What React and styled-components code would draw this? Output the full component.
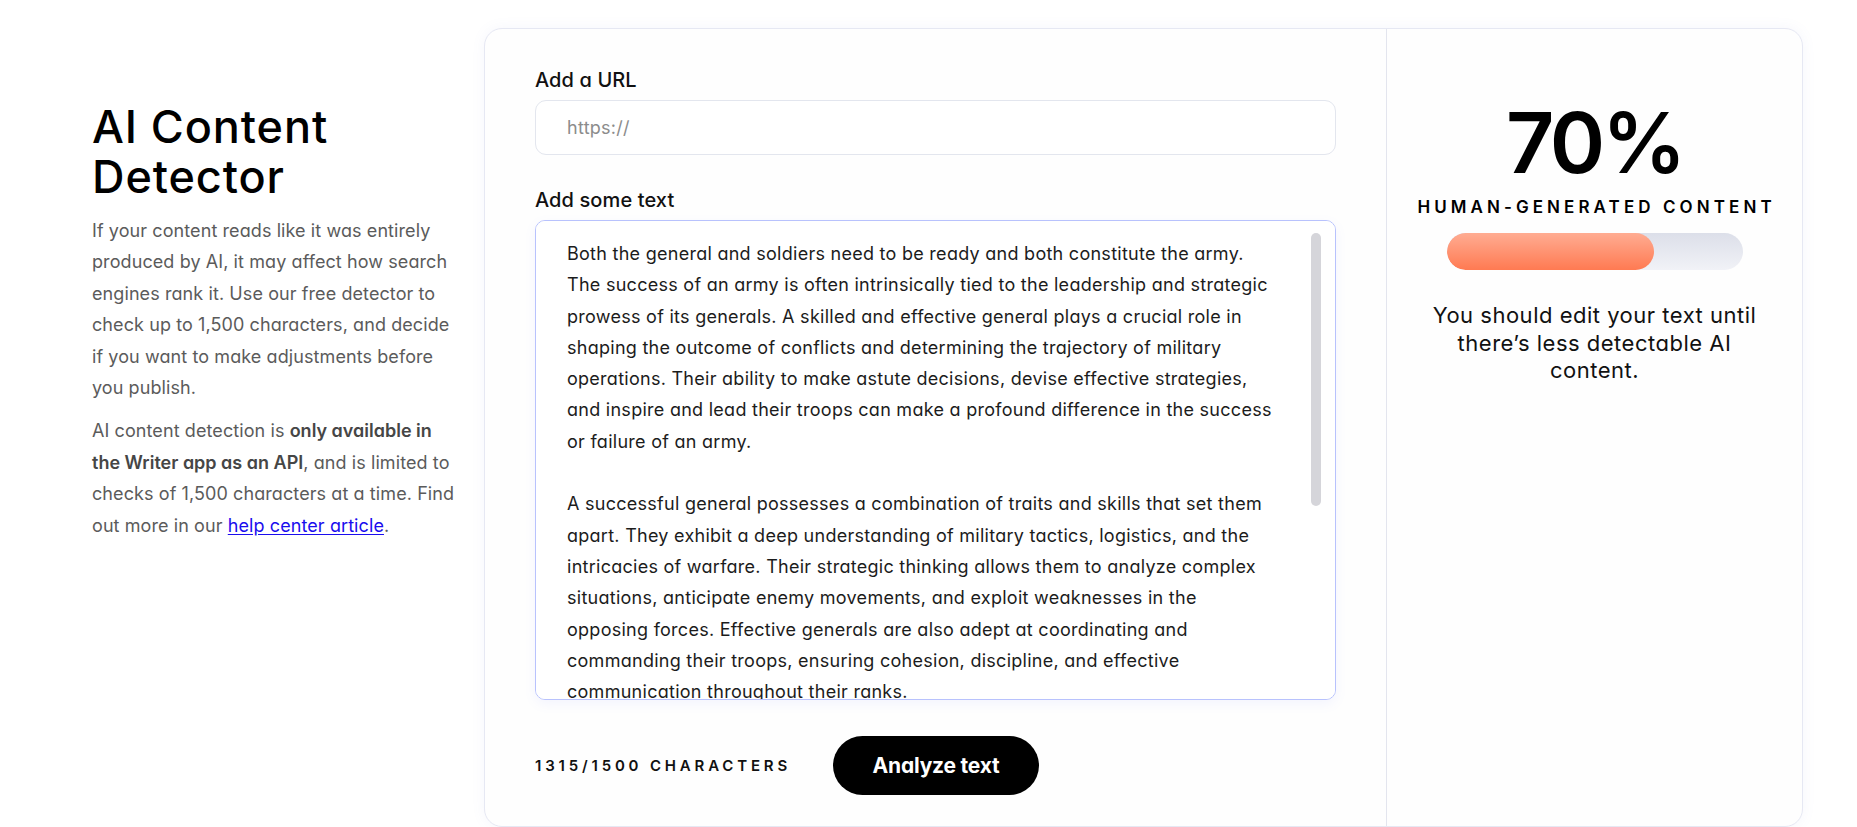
import React from "react";
import styled, { createGlobalStyle } from "styled-components";

const GlobalStyle = createGlobalStyle`
  html, body {
    margin: 0;
    padding: 0;
    background: #ffffff;
    overflow: hidden;
  }
  body {
    font-family: "Inter", "Noto Sans", "Liberation Sans", sans-serif;
    font-feature-settings: "cv11" 1;
    color: #111111;
    -webkit-font-smoothing: antialiased;
  }
  *, *::before, *::after { box-sizing: border-box; }
`;

const Page = styled.main`
  display: flex;
  align-items: flex-start;
  gap: 22px;
  padding: 28px 0 0 92px;
`;

const Intro = styled.section`
  width: 370px;
  flex: none;
  padding-top: 74px;
`;

const Title = styled.h1`
  margin: 0 0 13px;
  font-size: 45px;
  line-height: 50px;
  font-weight: 500;
  letter-spacing: 0.02em;
  color: #000000;
`;

const Lead = styled.p`
  margin: 0 0 12px;
  font-size: 18px;
  line-height: 31.4px;
  letter-spacing: 0.005em;
  color: #5b5b5b;

  strong {
    font-weight: 600;
    letter-spacing: 0;
    color: #464646;
  }
`;

const HelpLink = styled.a`
  color: #1a0dee;
  text-decoration: underline;
  text-underline-offset: 2px;
`;

const Card = styled.section`
  flex: none;
  width: 1319px;
  display: flex;
  border: 1px solid #e6e8f3;
  border-radius: 18px;
  background: #fefefe;
  box-shadow: 0 0 14px rgba(120, 130, 210, 0.07);
`;

const FormPane = styled.div`
  width: 902px;
  flex: none;
  padding: 36px 50px 31px;
  border-right: 1px solid #e3e5ee;
  display: flex;
  flex-direction: column;
`;

const Label = styled.label`
  display: block;
  margin: ${(p) => (p.$spaced ? "30px" : "0")} 0 5px;
  font-size: 20px;
  line-height: 30px;
  font-weight: 500;
  letter-spacing: 0.005em;
  color: #111111;
`;

const UrlInput = styled.input`
  width: 100%;
  height: 55px;
  padding: 0 20px 0 31px;
  border: 1px solid #e3e6ee;
  border-radius: 11px;
  background: #ffffff;
  font: inherit;
  font-size: 18px;
  letter-spacing: 0.015em;
  color: #222222;
  outline: none;

  &::placeholder {
    color: #8c8c8c;
  }
`;

const TextBox = styled.div`
  position: relative;
`;

const TextArea = styled.textarea`
  display: block;
  width: 100%;
  height: 480px;
  margin: 0;
  padding: 17px 56px 17px 31px;
  border: 1px solid #b8c2fd;
  border-radius: 10px;
  background: #ffffff;
  box-shadow: 0 4px 12px rgba(110, 125, 255, 0.08);
  font: inherit;
  font-size: 18px;
  line-height: 31.3px;
  letter-spacing: 0.015em;
  color: #1c1c1c;
  resize: none;
  outline: none;
  overflow-y: scroll;
  scrollbar-width: none;
`;

const ScrollThumb = styled.span`
  position: absolute;
  top: 13px;
  right: 15px;
  width: 10px;
  height: 273px;
  border-radius: 5px;
  background: #d5d5da;
  pointer-events: none;
`;

const Footer = styled.div`
  margin-top: 36px;
  display: flex;
  align-items: center;
  gap: 42px;
`;

const Count = styled.span`
  font-size: 15px;
  font-weight: 600;
  letter-spacing: 0.255em;
  text-transform: uppercase;
  color: #111111;
`;

const AnalyzeButton = styled.button`
  width: 206px;
  height: 59px;
  border: none;
  border-radius: 30px;
  background: #000000;
  color: #ffffff;
  font: inherit;
  font-size: 21px;
  font-weight: 700;
  letter-spacing: -0.01em;
  cursor: pointer;
`;

const ResultPane = styled.div`
  flex: 1;
  min-width: 0;
  padding: 72px 24px 0;
  display: flex;
  flex-direction: column;
  align-items: center;
  text-align: center;
`;

const Score = styled.div`
  font-size: 84px;
  line-height: 1;
  font-weight: 600;
  letter-spacing: -0.04em;
  color: #000000;
`;

const ScoreLabel = styled.div`
  margin-top: 10px;
  padding-left: 0.24em;
  font-size: 17px;
  line-height: 24px;
  font-weight: 600;
  letter-spacing: 0.24em;
  text-transform: uppercase;
  color: #000000;
  white-space: nowrap;
`;

const Meter = styled.div`
  margin-top: 14px;
  width: 296px;
  height: 37px;
  border-radius: 19px;
  overflow: hidden;
  background: linear-gradient(180deg, #dcdfe9 0%, #f1f2f7 100%);
`;

const MeterFill = styled.div`
  height: 100%;
  border-radius: 19px;
  background: linear-gradient(180deg, #ffac92 0%, #ff7a52 100%);
`;

const Advice = styled.p`
  margin: 32px 0 0;
  max-width: 345px;
  font-size: 22px;
  line-height: 27.5px;
  font-weight: 400;
  letter-spacing: 0.023em;
  color: #111111;
`;

const SAMPLE_TEXT = `Both the general and soldiers need to be ready and both constitute the army. The success of an army is often intrinsically tied to the leadership and strategic prowess of its generals. A skilled and effective general plays a crucial role in shaping the outcome of conflicts and determining the trajectory of military operations. Their ability to make astute decisions, devise effective strategies, and inspire and lead their troops can make a profound difference in the success or failure of an army.

A successful general possesses a combination of traits and skills that set them apart. They exhibit a deep understanding of military tactics, logistics, and the intricacies of warfare. Their strategic thinking allows them to analyze complex situations, anticipate enemy movements, and exploit weaknesses in the opposing forces. Effective generals are also adept at coordinating and commanding their troops, ensuring cohesion, discipline, and effective communication throughout their ranks.

Ultimately, the bond between a general and the soldiers is built on trust. A general who leads by example and values the well-being of the troops can inspire loyalty that turns individuals into a formidable force.`;

const score = 70;

export default function App() {
  return (
    <>
      <GlobalStyle />
      <Page>
        <Intro>
          <Title>AI Content Detector</Title>
          <Lead>
            If your content reads like it was entirely produced by AI, it may
            affect how search engines rank it. Use our free detector to check up
            to 1,500 characters, and decide if you want to make adjustments
            before you publish.
          </Lead>
          <Lead>
            AI content detection is{" "}
            <strong>only available in the Writer app as an API</strong>, and is
            limited to checks of 1,500 characters at a time. Find out more in
            our <HelpLink href="#">help center article</HelpLink>.
          </Lead>
        </Intro>
        <Card>
          <FormPane>
            <Label htmlFor="url">Add a URL</Label>
            <UrlInput id="url" type="text" placeholder="https://" />
            <Label htmlFor="text" $spaced>
              Add some text
            </Label>
            <TextBox>
              <TextArea id="text" spellCheck={false} defaultValue={SAMPLE_TEXT} />
              <ScrollThumb aria-hidden="true" />
            </TextBox>
            <Footer>
              <Count>1315/1500 characters</Count>
              <AnalyzeButton type="button">Analyze text</AnalyzeButton>
            </Footer>
          </FormPane>
          <ResultPane>
            <Score>{score}%</Score>
            <ScoreLabel>Human-generated content</ScoreLabel>
            <Meter>
              <MeterFill style={{ width: `${score}%` }} />
            </Meter>
            <Advice>
              You should edit your text until there’s less detectable AI
              content.
            </Advice>
          </ResultPane>
        </Card>
      </Page>
    </>
  );
}
